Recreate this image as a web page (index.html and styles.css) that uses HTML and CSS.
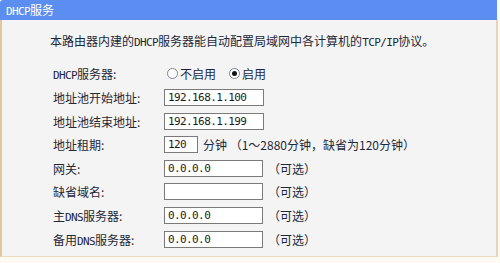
FILE: index.html
```html
<!DOCTYPE html>
<html lang="zh-CN">
<head>
    <meta charset="UTF-8">
    <title>DHCP服务</title>
    <link rel="stylesheet" href="styles.css">
</head>
<body>
    <div class="title"><span class="en">DHCP</span>服务</div>
    <div class="panel">
        <p class="intro">本路由器内建的<span class="en">DHCP</span>服务器能自动配置局域网中各计算机的<span class="en">TCP/IP</span>协议。</p>

        <div class="form">
            <div class="label"><span class="en">DHCP</span>服务器:</div>
            <div class="field">
                <span class="radio"></span><span class="radio-text">不启用</span>
                <span class="radio checked"></span><span class="radio-text">启用</span>
            </div>

            <div class="label">地址池开始地址:</div>
            <div class="field"><div class="input wide">192.168.1.100</div></div>

            <div class="label">地址池结束地址:</div>
            <div class="field"><div class="input wide">192.168.1.199</div></div>

            <div class="label">地址租期:</div>
            <div class="field">
                <div class="input short">120</div>
                <span class="note">分钟 （1～2880分钟，缺省为120分钟）</span>
            </div>

            <div class="label">网关:</div>
            <div class="field"><div class="input">0.0.0.0</div><span class="note">（可选）</span></div>

            <div class="label">缺省域名:</div>
            <div class="field"><div class="input"></div><span class="note">（可选）</span></div>

            <div class="label">主<span class="en">DNS</span>服务器:</div>
            <div class="field"><div class="input">0.0.0.0</div><span class="note">（可选）</span></div>

            <div class="label">备用<span class="en">DNS</span>服务器:</div>
            <div class="field"><div class="input">0.0.0.0</div><span class="note">（可选）</span></div>
        </div>
    </div>
</body>
</html>
```

FILE: styles.css
```css
html, body {
    margin: 0;
    background-color: #fdfaf3;
    font-family: "Noto Sans CJK SC", sans-serif;
    font-size: 12px;
    color: #1e2838;
    overflow: hidden;
}
.en {
    font-family: "DejaVu Sans Mono", monospace;
    font-size: 11px;
    letter-spacing: -0.6px;
}
/* blue title bar */
.title {
    width: 497px;
    height: 20px;
    line-height: 20px;
    padding-left: 6px;
    box-sizing: border-box;
    background-color: #5b8ef0;
    color: #ffffff;
    border-top-left-radius: 3px;
}
.panel {
    width: 498px;
    height: 237px;
    box-sizing: border-box;
    background-color: #f4f4f4;
    border-left: 2px solid #e3c69c;
    border-right: 2px solid #e9d5b6;
    border-bottom: 1px solid #efdcbd;
    padding-top: 13px;
}
.intro {
    margin: 0 0 0 48px;
    line-height: 16px;
    height: 16px;
    white-space: nowrap;
}
.form {
    display: grid;
    grid-template-columns: 111px auto;
    grid-auto-rows: 23.6px;
    align-items: center;
    margin-top: 13.2px;
    padding-left: 51px;
}
.label {
    white-space: nowrap;
}
.field {
    display: flex;
    align-items: center;
}
.radio {
    width: 11px;
    height: 11px;
    box-sizing: border-box;
    border: 1px solid #7b8794;
    border-radius: 50%;
    background-color: #ffffff;
    margin-left: 3px;
    display: flex;
    align-items: center;
    justify-content: center;
}
.radio.checked {
    margin-left: 13px;
}
.radio.checked::after {
    content: '';
    width: 5px;
    height: 5px;
    border-radius: 50%;
    background-color: #111111;
}
.radio-text {
    margin-left: 2px;
}
.input {
    width: 99px;
    height: 17px;
    box-sizing: border-box;
    border: 1px solid #7a7a7a;
    background-color: #ffffff;
    padding-left: 3px;
    font-family: "DejaVu Sans Mono", monospace;
    font-size: 11px;
    letter-spacing: -0.6px;
    line-height: 15px;
    color: #1a1a1a;
}
.input.wide {
    width: 100px;
}
.input.short {
    width: 34px;
}
.note {
    margin-left: 5px;
    white-space: nowrap;
}
```
